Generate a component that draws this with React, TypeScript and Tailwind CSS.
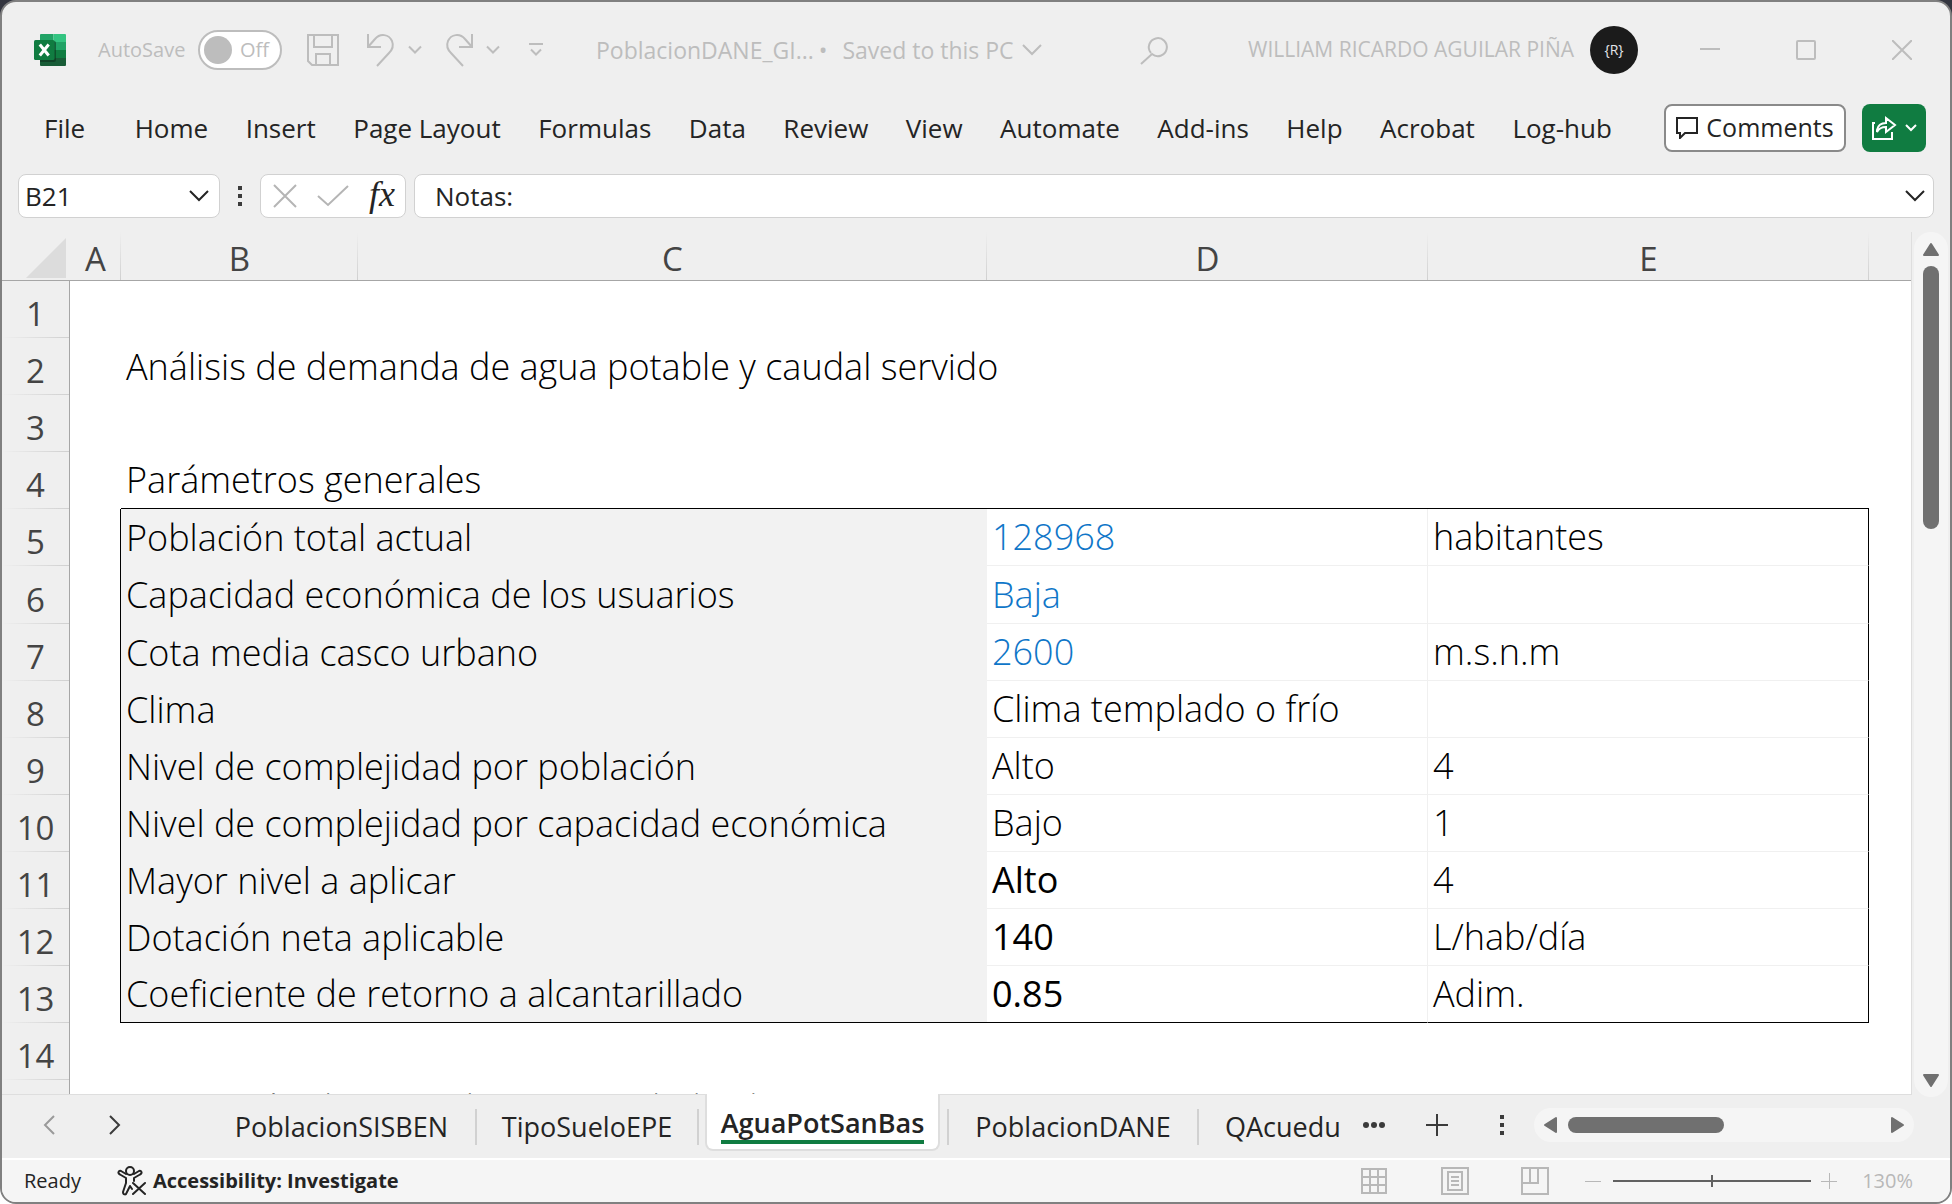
import type { ReactNode } from "react";

type IconProps = { className?: string; d: string; w: number; h: number; sw?: number };

function Line({ className = "", d, w, h, sw = 2 }: IconProps) {
  return (
    <svg className={`shrink-0 ${className}`} width={w} height={h} viewBox={`0 0 ${w} ${h}`} fill="none" stroke="currentColor" strokeWidth={sw} aria-hidden="true">
      <path d={d} />
    </svg>
  );
}

function ExcelLogo() {
  return (
    <svg className="shrink-0" width="32" height="32" viewBox="0 0 32 32" aria-hidden="true">
      <path d="M7 0H19.500V8H6V1a1 1 0 0 1 1-1z" fill="#21a366" />
      <path d="M19.500 0H31a1 1 0 0 1 1 1V8H19.500z" fill="#33c481" />
      <path d="M6 8H19.500V16H6z" fill="#107c41" />
      <path d="M19.500 8H32V16H19.500z" fill="#21a366" />
      <path d="M6 16H19.500V24H6z" fill="#185c37" />
      <path d="M19.500 16H32V24H19.500z" fill="#107c41" />
      <path d="M6 24H32V31a1 1 0 0 1-1 1H7a1 1 0 0 1-1-1z" fill="#185c37" />
      <path d="M6 7H20a2 2 0 0 1 2 2V26a2 2 0 0 1-2 2H6z" fill="#0b2e1c" opacity=".55" />
      <rect x="0" y="6" width="20.500" height="20" rx="1.500" fill="#107c41" />
      <path d="M5.800 10.500L14.700 21.500M14.700 10.500L5.800 21.500" stroke="#fff" strokeWidth="3" />
    </svg>
  );
}

function TitleBar() {
  return (
    <header className="flex h-24 shrink-0 items-center pl-8 text-[#bdbdbd]">
      <ExcelLogo />
      <label className="ml-8 flex items-center gap-3 text-xl">
        <span className="w-[88px]">AutoSave</span>
        <span className="flex h-10 w-[84px] items-center rounded-full border-2 border-[#bdbdbd] bg-white pl-1">
          <input type="checkbox" className="size-7 appearance-none rounded-full bg-[#bdbdbd]" />
          <span className="ml-2">Off</span>
        </span>
      </label>
      <button className="ml-6" aria-label="Save">
        <Line w={34} h={34} d="M2 2H32V32H6L2 28zM8 2V14H26V2M10 32V21H24V32" />
      </button>
      <button className="ml-[26px]" aria-label="Undo">
        <Line w={32} h={34} d="M2 1V14H15M2 14L9 6C14 0 23 1 26 8C28 13 26 17 23 20L11 33" />
      </button>
      <button className="ml-2.5" aria-label="Undo options">
        <Line w={14} h={10} d="M1 1.500L7 7.500L13 1.500" />
      </button>
      <button className="ml-5" aria-label="Redo">
        <Line w={32} h={34} d="M30 1V14H17M30 14L23 6C18 0 9 1 6 8C4 13 6 17 9 20L21 33" />
      </button>
      <button className="ml-3" aria-label="Redo options">
        <Line w={14} h={10} d="M1 1.500L7 7.500L13 1.500" />
      </button>
      <button className="ml-7" aria-label="Customize toolbar">
        <Line w={16} h={14} d="M1 1H15M3 6.500L8 11.500L13 6.500" />
      </button>
      <button className="ml-[52px] flex items-center text-[23px] whitespace-nowrap">
        <span className="w-[216px]">PoblacionDANE_GI...</span>
        <span className="w-[22px] text-center">•</span>
        <span className="w-[188px]">Saved to this PC</span>
        <Line w={20} h={14} d="M1 2L10 11L19 2" />
      </button>
      <button className="ml-[98px]" aria-label="Search">
        <Line w={30} h={30} d="M11 18A9 9 0 1 1 12 19L1 29" />
      </button>
      <button className="ml-auto flex items-center gap-4 text-[21px] whitespace-nowrap">
        WILLIAM RICARDO AGUILAR PIÑA
        <span className="flex size-12 items-center justify-center rounded-full bg-[#1b1b1b] text-sm text-gray-200">{"{R}"}</span>
      </button>
      <div className="mr-[38px] ml-[62px] flex items-center gap-[76px]">
        <button aria-label="Minimize"><Line w={20} h={20} d="M0 9H20" /></button>
        <button aria-label="Maximize"><Line w={20} h={20} d="M2 1H18Q19 1 19 2V18Q19 19 18 19H2Q1 19 1 18V2Q1 1 2 1z" /></button>
        <button aria-label="Close"><Line w={20} h={20} d="M0 0L20 20M20 0L0 20" /></button>
      </div>
    </header>
  );
}

const menu = ["File", "Home", "Insert", "Page Layout", "Formulas", "Data", "Review", "View", "Automate", "Add-ins", "Help", "Acrobat", "Log-hub"];

function MenuBar() {
  return (
    <div className="flex h-15 shrink-0 items-center pr-6 pl-[42px] text-[#242424]">
      <nav className="flex grow items-center justify-between text-[26px] whitespace-nowrap">
        {menu.map((m) => (
          <button key={m} className="first:mr-3">{m}</button>
        ))}
      </nav>
      <button className="ml-[52px] flex h-12 w-[182px] shrink-0 items-center justify-center gap-2 rounded-lg border-2 border-[#8a8a8a] bg-white text-[25px]">
        <Line w={22} h={22} d="M1 1H21V16H9L4 21V16H1z" />
        Comments
      </button>
      <button className="ml-4 flex h-12 w-16 shrink-0 items-center justify-center gap-2 rounded-lg bg-[#107c41] text-white" aria-label="Share">
        <Line w={26} h={26} d="M4 8H2V24H21V17M6 15C7 10 11 8 15 8V3L24 10L15 17V12C11 12 8 13 6 17z" />
        <Line w={12} h={10} d="M1 2L6 7L11 2" />
      </button>
    </div>
  );
}

function FormulaBar() {
  const box = "flex h-11 items-center rounded-lg border border-[#d1d1d1] bg-white";
  return (
    <div className="flex h-[74px] shrink-0 items-center pt-0.5 pr-4 pl-4 text-[26px] text-[#242424]">
      <div className={`${box} w-[202px] shrink-0 pr-2.5`}>
        <input aria-label="Name box" defaultValue="B21" className="w-0 grow pl-1.5 outline-none" />
        <button aria-label="Open names"><Line w={20} h={14} d="M1 2L10 11L19 2" /></button>
      </div>
      <button className="mx-[18px] text-[#3b3b3b]" aria-label="Resize name box">
        <svg width="4" height="20" viewBox="0 0 4 20" fill="currentColor" aria-hidden="true"><path d="M0 0H4V4H0zM0 8H4V12H0zM0 16H4V20H0z" /></svg>
      </button>
      <div className={`${box} mr-2 w-[146px] shrink-0 justify-between pr-2.5 pl-3 text-[#b5b5b5]`}>
        <button aria-label="Cancel"><Line w={24} h={24} d="M1 1L23 23M23 1L1 23" /></button>
        <button aria-label="Enter"><Line w={32} h={22} d="M1 11L11 20L31 1" /></button>
        <button className="pb-1 font-['Liberation_Serif',serif] text-4xl leading-8 text-[#242424] italic" aria-label="Insert function">fx</button>
      </div>
      <div className={`${box} grow pr-2`}>
        <input aria-label="Formula" defaultValue="Notas:" className="w-0 grow pl-5 outline-none" />
        <button aria-label="Expand formula bar"><Line w={20} h={14} d="M1 2L10 11L19 2" /></button>
      </div>
    </div>
  );
}

type Row = { n: number; label: string; value: string; unit: string; kind?: "input" | "bold" };

const rows: Row[] = [
  { n: 5, label: "Población total actual", value: "128968", unit: "habitantes", kind: "input" },
  { n: 6, label: "Capacidad económica de los usuarios", value: "Baja", unit: "", kind: "input" },
  { n: 7, label: "Cota media casco urbano", value: "2600", unit: "m.s.n.m", kind: "input" },
  { n: 8, label: "Clima", value: "Clima templado o frío", unit: "" },
  { n: 9, label: "Nivel de complejidad por población", value: "Alto", unit: "4" },
  { n: 10, label: "Nivel de complejidad por capacidad económica", value: "Bajo", unit: "1" },
  { n: 11, label: "Mayor nivel a aplicar", value: "Alto", unit: "4", kind: "bold" },
  { n: 12, label: "Dotación neta aplicable", value: "140", unit: "L/hab/día", kind: "bold" },
  { n: 13, label: "Coeficiente de retorno a alcantarillado", value: "0.85", unit: "Adim.", kind: "bold" },
];

const valueStyle = {
  input: "text-[#0f76c8]",
  bold: "font-normal text-black",
  plain: "text-black",
};

function RowHead({ n }: { n: number }) {
  return (
    <th scope="row" className="border-r border-[#a6a6a6] bg-[#efefef] bg-[linear-gradient(to_right,#efefef,#d0d0d0)] bg-[length:100%_1px] bg-bottom bg-no-repeat pt-2 text-[33px] leading-none font-normal text-[#444]">
      {n}
    </th>
  );
}

function ColHead({ children, line = true }: { children?: ReactNode; line?: boolean }) {
  return (
    <th
      scope="col"
      className={`border-b border-[#a6a6a6] pt-1 text-[33px] leading-none font-normal text-[#444] ${
        line ? "bg-[linear-gradient(to_bottom,#efefef,#d0d0d0)] bg-[length:1px_100%] bg-right bg-no-repeat" : ""
      }`}
    >
      {children}
    </th>
  );
}

function TextRow({ n, text = "", boxTop = false }: { n: number; text?: string; boxTop?: boolean }) {
  const edge = boxTop ? "border-b border-black" : "";
  return (
    <tr className="h-[57px]">
      <RowHead n={n} />
      <td />
      <td colSpan={2} className={`pl-[5px] ${edge}`}>{text}</td>
      <td className={edge} />
      <td className={edge} />
      <td />
    </tr>
  );
}

function Sheet() {
  return (
    <div className="min-w-0 grow overflow-hidden border-r border-b border-[#dedede]">
      <table className="w-full table-fixed border-separate border-spacing-0 text-left text-4xl leading-none font-light whitespace-nowrap text-black">
        <colgroup>
          <col className="w-[68px]" />
          <col className="w-[51px]" />
          <col className="w-[237px]" />
          <col className="w-[629px]" />
          <col className="w-[441px]" />
          <col className="w-[441px]" />
          <col />
        </colgroup>
        <thead className="bg-[#efefef] text-center">
          <tr className="h-[49px]">
            <th className="border-b border-[#a6a6a6] p-0" aria-label="Select all">
              <svg className="mt-1 mr-1 ml-auto" width="40" height="40" viewBox="0 0 40 40" aria-hidden="true"><path d="M40 0V40H0z" fill="#dcdcdc" /></svg>
            </th>
            <ColHead>A</ColHead>
            <ColHead>B</ColHead>
            <ColHead>C</ColHead>
            <ColHead>D</ColHead>
            <ColHead>E</ColHead>
            <ColHead line={false} />
          </tr>
        </thead>
        <tbody className="bg-white [&_th]:text-center">
          <TextRow n={1} />
          <TextRow n={2} text="Análisis de demanda de agua potable y caudal servido" />
          <TextRow n={3} />
          <TextRow n={4} text="Parámetros generales" boxTop />
          {rows.map((r) => {
            const edge = r.n === 13 ? "border-b border-b-black" : "border-b border-b-[#f0f0f0]";
            return (
              <tr key={r.n} className={r.n === 6 ? "h-[58px]" : "h-[57px]"}>
                <RowHead n={r.n} />
                <td className="border-r border-black" />
                <td colSpan={2} className={`bg-[#f2f2f2] pl-[5px] ${r.n === 13 ? "border-b border-black" : ""}`}>{r.label}</td>
                <td className={`border-r border-r-[#f0f0f0] pl-[5px] ${edge} ${valueStyle[r.kind ?? "plain"]}`}>{r.value}</td>
                <td className={`border-r border-r-black pl-[5px] ${edge}`}>{r.unit}</td>
                <td />
              </tr>
            );
          })}
          <TextRow n={14} />
          <TextRow n={15} text="Estimación del nivel de complejidad y de la" />
        </tbody>
      </table>
    </div>
  );
}

function Arrow({ d, label }: { d: string; label: string }) {
  return (
    <button aria-label={label} className="shrink-0 text-[#707070]">
      <svg width="18" height="18" viewBox="0 0 18 18" fill="currentColor" stroke="currentColor" strokeWidth="2" strokeLinejoin="round" aria-hidden="true"><path d={d} /></svg>
    </button>
  );
}

function VerticalScroll() {
  return (
    <div className="mr-0.5 ml-0.5 -mb-0.5 flex w-[34px] shrink-0 flex-col items-center rounded-full bg-[#f5f5f5] pt-2 pb-2">
      <Arrow label="Scroll up" d="M9 4L16 15H2z" />
      <div className="mt-2 h-[263px] w-4 rounded-full bg-[#707070]" />
      <div className="mt-auto flex">
        <Arrow label="Scroll down" d="M2 4H16L9 15z" />
      </div>
    </div>
  );
}

function Tab({ name, className }: { name: string; className: string }) {
  return (
    <button className={`flex h-9 shrink-0 items-center justify-center border-r-2 border-[#d1d1d1] ${className}`}>{name}</button>
  );
}

function SheetTabs() {
  return (
    <div className="flex h-[65px] shrink-0 border-b-2 border-white text-[27px] whitespace-nowrap text-[#242424]">
      <div className="flex items-center pb-1 pl-10">
        <button aria-label="Previous sheet" className="text-[#9a9a9a]"><Line w={14} h={20} d="M12 1L3 10L12 19" /></button>
        <button aria-label="Next sheet" className="ml-[52px] text-[#3b3b3b]"><Line w={14} h={20} d="M2 1L11 10L2 19" /></button>
      </div>
      <div className="ml-[86px] flex pt-[14px]">
        <Tab name="PoblacionSISBEN" className="w-[269px]" />
        <Tab name="TipoSueloEPE" className="w-[222px]" />
      </div>
      <button className="-mt-px ml-1.5 flex h-[57px] w-[235px] shrink-0 flex-col items-center rounded-b-lg border-x-2 border-b-2 border-[#dedede] bg-white pt-3 font-semibold">
        <span className="border-b-4 border-[#107c41] leading-[34px]">AguaPotSanBas</span>
      </button>
      <div className="flex pt-[14px]">
        <Tab name="" className="w-[9px]" />
        <Tab name="PoblacionDANE" className="w-[250px]" />
        <button className="ml-[26px] flex h-9 items-center">QAcuedu</button>
      </div>
      <div className="ml-auto flex items-center pr-9 pb-1 text-[#3b3b3b]">
        <button aria-label="More sheets">
          <svg width="24" height="8" viewBox="0 0 24 8" fill="currentColor" aria-hidden="true"><circle cx="4" cy="4" r="3" /><circle cx="12" cy="4" r="3" /><circle cx="20" cy="4" r="3" /></svg>
        </button>
        <button aria-label="New sheet" className="ml-10"><Line w={22} h={22} d="M11 0V22M0 11H22" /></button>
        <button aria-label="Resize tabs" className="ml-[52px]">
          <svg width="4" height="20" viewBox="0 0 4 20" fill="currentColor" aria-hidden="true"><path d="M0 0H4V4H0zM0 8H4V12H0zM0 16H4V20H0z" /></svg>
        </button>
        <div className="ml-[30px] flex h-[34px] w-[380px] items-center rounded-full bg-[#f5f5f5] px-2">
          <Arrow label="Scroll left" d="M14 2V16L3 9z" />
          <div className="ml-2 h-4 w-[156px] rounded-full bg-[#707070]" />
          <div className="ml-auto flex">
            <Arrow label="Scroll right" d="M4 2V16L15 9z" />
          </div>
        </div>
      </div>
    </div>
  );
}

function StatusBar() {
  return (
    <footer className="flex h-[42px] shrink-0 items-center bg-[#f5f5f5] pr-[37px] pl-[22px] text-xl text-[#242424]">
      <span className="w-[93px]">Ready</span>
      <button className="flex items-center gap-1.5 font-bold">
        <svg width="30" height="30" viewBox="0 0 30 30" fill="none" stroke="currentColor" strokeWidth="2" strokeLinejoin="round" strokeLinecap="round" aria-hidden="true">
          <circle cx="13" cy="5" r="4" />
          <path d="M9 8L4 5C2 4 0 7 3 8.500L9 12V17L6 26C6 29 9 29 9.500 27L13 20L15 23M17 8L22 5C24 4 26 7 23 8.500L17 12V15M16 17L28 28M28 17L16 28" />
        </svg>
        Accessibility: Investigate
      </button>
      <div className="ml-auto flex items-center text-[#b8b8b8]">
        <button aria-label="Normal view"><Line w={28} h={28} d="M2 2H26V26H2zM10 2V26M18 2V26M2 10H26M2 18H26" /></button>
        <button aria-label="Page layout view" className="ml-[53px]"><Line w={28} h={28} d="M1 1H27V27H1zM7 5H21V23H7zM10 10H18M10 14H18M10 18H18" /></button>
        <button aria-label="Page break view" className="ml-[52px]"><Line w={28} h={28} d="M1 1H27V27H1zM1 16H17V1M9 1V16" /></button>
        <button aria-label="Zoom out" className="ml-9"><Line w={16} h={16} sw={1} d="M0 8.500H16" /></button>
        <div className="ml-3 flex h-4 w-[198px] items-center bg-[linear-gradient(#616161,#616161)] bg-[length:100%_2px] bg-center bg-no-repeat">
          <input
            type="range"
            aria-label="Zoom"
            min={10}
            max={250}
            defaultValue={130}
            className="h-3 w-full appearance-none bg-transparent [&::-webkit-slider-thumb]:h-3 [&::-webkit-slider-thumb]:w-0.5 [&::-webkit-slider-thumb]:appearance-none [&::-webkit-slider-thumb]:bg-[#616161]"
          />
        </div>
        <button aria-label="Zoom in" className="ml-2.5"><Line w={16} h={16} sw={1} d="M0 8.500H16M8.500 0V16" /></button>
        <button className="ml-6 w-[52px] text-right">130%</button>
      </div>
    </footer>
  );
}

export default function App() {
  return (
    <div className="h-screen bg-linear-to-b from-[#33353f] to-white font-['Open_Sans','Noto_Sans',sans-serif]">
      <div className="flex h-full flex-col overflow-hidden rounded-2xl border-2 border-[#808080] bg-[#efefef]">
        <TitleBar />
        <MenuBar />
        <FormulaBar />
        <main className="flex min-h-0 grow">
          <Sheet />
          <VerticalScroll />
        </main>
        <SheetTabs />
        <StatusBar />
      </div>
    </div>
  );
}
